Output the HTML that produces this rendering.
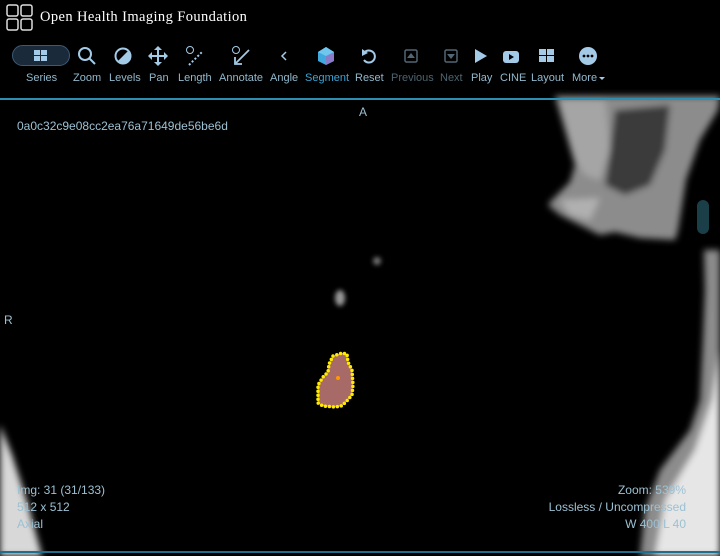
<!DOCTYPE html>
<html><head><meta charset="utf-8"><style>
body{margin:0;width:720px;height:556px;background:#000;overflow:hidden;font-family:"Liberation Sans",sans-serif;position:relative}
.t{position:absolute;color:#fff;font-family:"Liberation Serif",serif;font-size:14.5px;letter-spacing:0.4px;left:40px;top:9px}
.lbl{position:absolute;top:72px;font-size:11px;color:#91b9cd;white-space:nowrap}
.ov{position:absolute;color:#9cc1d3;font-size:12px;line-height:17px}
svg{position:absolute}
</style></head><body>
<svg width="720" height="556" style="left:0;top:0">
<defs><filter id="b" x="-20%" y="-20%" width="140%" height="140%"><feGaussianBlur stdDeviation="3.5"/></filter><filter id="b2"><feGaussianBlur stdDeviation="2.5"/></filter></defs>
<g filter="url(#b)">
<polygon points="555,96 720,96 718,110 700,140 686,180 678,230 675,240 640,238 615,232 600,235 560,215 548,205 552,200 570,182 575,165" fill="#8c8c8c"/>
<polygon points="560,100 605,100 610,150 600,180 585,175 575,160" fill="#a5a5a5"/>
<polygon points="615,110 670,105 665,150 650,185 625,195 605,185 610,150" fill="#3a3a3a"/>
<polygon points="560,200 600,198 590,220 570,215" fill="#b0b0b0"/>
<polygon points="704,250 720,250 720,556 640,556 645,510 660,470 690,430 700,400 703,340 705,290" fill="#8c8c8c"/>
<polygon points="720,350 720,556 655,556 665,500 695,450 712,400" fill="#e6e6e6"/>
<polygon points="0,425 12,455 28,505 42,556 0,556" fill="#d8d8d8"/>
</g>
<g filter="url(#b2)">
<ellipse cx="340" cy="298" rx="5" ry="8" fill="#999"/>
<ellipse cx="377" cy="261" rx="4" ry="4" fill="#777"/>
</g>
<polygon points="333,356 342,353 347,354 348,362 352,370 353,385 352,395 346,402 341,406 335,407 323,406 318,403 318,385 323,377 328,372 329,364" fill="#a86a66" stroke="#ffea00" stroke-width="3.5" stroke-dasharray="0 4" stroke-linecap="round"/>
<circle cx="338" cy="378" r="2" fill="#ff9900"/>
<line x1="0" y1="99" x2="720" y2="99" stroke="#2b8fb2" stroke-width="2"/>
<line x1="0" y1="552" x2="720" y2="552" stroke="#1f6f8f" stroke-width="2"/>
<rect x="697" y="200" width="12" height="34" rx="6" fill="#1b3f48"/>
</svg>
<svg width="28" height="28" style="left:6px;top:4px" fill="none" stroke="#ddd" stroke-width="1.5"><rect x="1" y="1" width="11" height="11" rx="2"/><rect x="15" y="1" width="11" height="11" rx="2"/><rect x="1" y="15" width="11" height="11" rx="2"/><rect x="15" y="15" width="11" height="11" rx="2"/></svg>
<div class="t">Open Health Imaging Foundation</div>
<div style="position:absolute;left:12px;top:45px;width:56px;height:19px;border:1.5px solid #3a5a78;border-radius:11px;background:#1b2a3a"></div>
<svg width="720" height="40" style="left:0;top:44px" fill="#a3cbe8" stroke="#a3cbe8">
<g stroke="none"><rect x="34" y="6" width="6" height="5"/><rect x="41" y="6" width="6" height="5"/><rect x="34" y="12" width="6" height="5"/><rect x="41" y="12" width="6" height="5"/></g>
<g fill="none" stroke-width="2"><circle cx="85" cy="10" r="6"/><line x1="89" y1="14" x2="95" y2="20"/></g>
<circle cx="123" cy="12" r="7.5" fill="none" stroke-width="2"/><path d="M128 7 A7 7 0 0 1 118 17 Z" stroke="none"/>
<g stroke-width="2" fill="none"><line x1="150" y1="12" x2="166" y2="12"/><line x1="158" y1="4" x2="158" y2="20"/></g>
<g stroke="none"><polygon points="158,2 154,6 162,6"/><polygon points="158,22 154,18 162,18"/><polygon points="148,12 152,8 152,16"/><polygon points="168,12 164,8 164,16"/></g>
<g fill="none" stroke-width="1"><circle cx="190" cy="6" r="3.5"/></g>
<g stroke-width="2" stroke-dasharray="2 2" fill="none"><line x1="189" y1="21" x2="203" y2="7"/></g>
<circle cx="236" cy="6" r="3.5" fill="none" stroke-width="1"/><g fill="none" stroke-width="1.8"><line x1="236" y1="19" x2="249" y2="6"/><polyline points="235,13 235,20 242,20"/></g>
<polyline points="286,8 282,12 286,16" fill="none" stroke-width="1.5"/>
<g stroke="none"><polygon points="326,3 334,8 334,17 326,21 318,17 318,8" fill="#3fa9de"/><polygon points="326,12 334,8 334,17 326,21" fill="#8a7cc8"/><polygon points="326,3 334,8 326,12 318,8" fill="#6fc7ef"/></g>
<path d="M364 9 A6 6 0 1 1 364 16" fill="none" stroke-width="2"/><polygon points="362,5 362,12 368,9" stroke="none"/>
<g opacity="0.5"><rect x="405" y="6" width="12" height="12" rx="1.5" fill="none" stroke-width="1.5"/><polygon points="411,9 407,14 415,14" stroke="none"/><rect x="445" y="6" width="12" height="12" rx="1.5" fill="none" stroke-width="1.5"/><polygon points="451,15 447,10 455,10" stroke="none"/></g>
<polygon points="475,5 487,12 475,19" stroke="none"/>
<rect x="503" y="7" width="16" height="12" rx="3" stroke="none"/><polygon points="509,10 514,13 509,16" fill="#000" stroke="none"/>
<g stroke="none"><rect x="539" y="5" width="7" height="6"/><rect x="547" y="5" width="7" height="6"/><rect x="539" y="12" width="7" height="6"/><rect x="547" y="12" width="7" height="6"/></g>
<circle cx="588" cy="12" r="9" stroke="none"/><g fill="#000" stroke="none"><circle cx="584" cy="12" r="1.4"/><circle cx="588" cy="12" r="1.4"/><circle cx="592" cy="12" r="1.4"/></g>
<polygon points="599,33 605,33 602,36" stroke="none"/>
</svg>
<div class="lbl" style="left:26px">Series</div>
<div class="lbl" style="left:73px">Zoom</div>
<div class="lbl" style="left:109px">Levels</div>
<div class="lbl" style="left:149px">Pan</div>
<div class="lbl" style="left:178px">Length</div>
<div class="lbl" style="left:219px">Annotate</div>
<div class="lbl" style="left:270px">Angle</div>
<div class="lbl" style="left:305px;color:#3ba4d6">Segment</div>
<div class="lbl" style="left:355px">Reset</div>
<div class="lbl" style="left:391px;color:#4c6470">Previous</div>
<div class="lbl" style="left:440px;color:#4c6470">Next</div>
<div class="lbl" style="left:471px">Play</div>
<div class="lbl" style="left:500px">CINE</div>
<div class="lbl" style="left:531px">Layout</div>
<div class="lbl" style="left:572px">More</div>
<div class="ov" style="left:17px;top:118px">0a0c32c9e08cc2ea76a71649de56be6d</div>
<div class="ov" style="left:359px;top:104px">A</div>
<div class="ov" style="left:4px;top:312px">R</div>
<div class="ov" style="left:17px;top:482px">Img: 31 (31/133)<br>512 x 512<br>Axial</div>
<div class="ov" style="right:34px;top:482px;text-align:right">Zoom: 539%<br>Lossless / Uncompressed<br>W 400 L 40</div>
</body></html>
